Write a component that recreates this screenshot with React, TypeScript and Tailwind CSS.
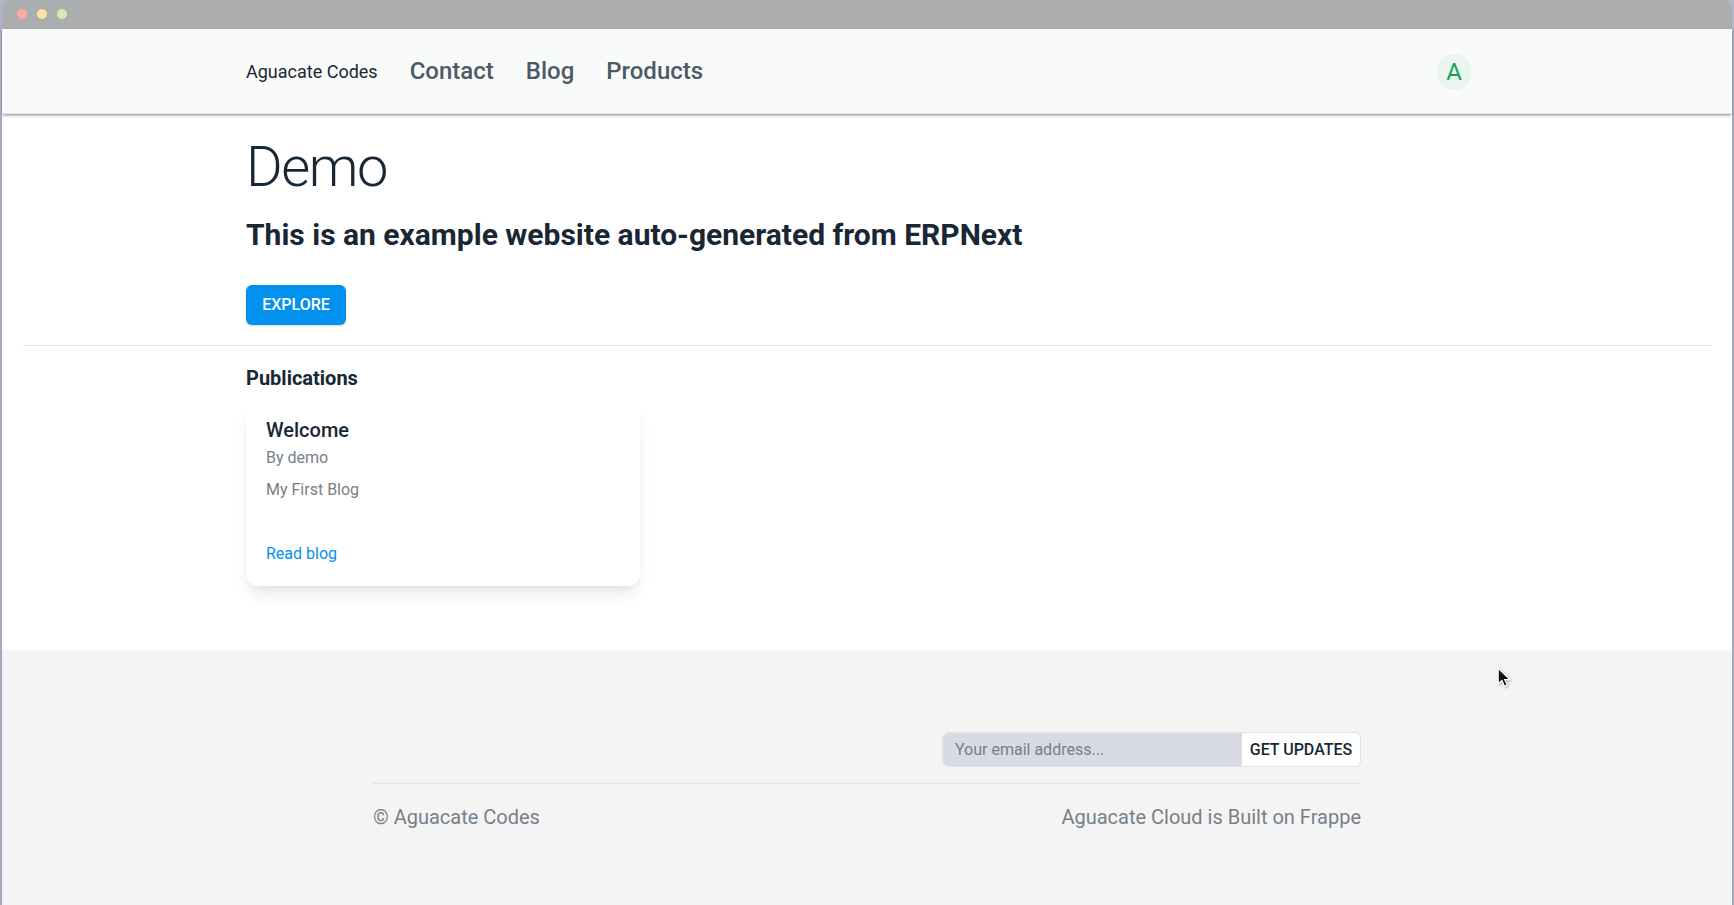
const navLinks = ["Contact", "Blog", "Products"];

function TitleBar() {
  return (
    <div className="flex h-[29px] shrink-0 items-center gap-[10px] rounded-t-[10px] bg-[#abadae] pb-px pl-[15px]">
      <span className="size-[10px] rounded-full bg-[#ffa9a7]" />
      <span className="size-[10px] rounded-full bg-[#ffe3a0]" />
      <span className="size-[10px] rounded-full bg-[#d4eab4]" />
    </div>
  );
}

function Header() {
  return (
    <header className="relative flex h-[85px] shrink-0 items-center justify-between bg-[#f9fbfa] pr-[260px] pl-[244px] shadow-[inset_0_-1px_0_#e6e8e8,0_2px_3px_-1px_rgba(0,0,0,0.5)]">
      <nav className="flex items-center gap-8 pb-0.5">
        <a className="pt-0.5 text-[18px] leading-6 text-[#192734]">Aguacate Codes</a>
        {navLinks.map((label) => (
          <a key={label} className="text-2xl leading-8 font-medium text-[#4c5a67]">
            {label}
          </a>
        ))}
      </nav>
      <div className="mt-px flex size-9 items-center justify-center rounded-full bg-[#eaf5ee] text-2xl leading-none text-[#16a05f]">
        A
      </div>
    </header>
  );
}

function BlogCard() {
  return (
    <article className="mt-[10px] h-[184px] w-[394px] rounded-xl bg-white px-5 pt-[14px] text-base leading-6 shadow-[0_10px_15px_-3px_rgba(0,0,0,0.1),0_4px_6px_-2px_rgba(0,0,0,0.03)]">
      <h3 className="text-xl leading-7 font-medium text-[#192734]">Welcome</h3>
      <p className="mt-0.5 text-[#74808b]">By demo</p>
      <p className="mt-2 text-[#7c7e80]">My First Blog</p>
      <a className="mt-10 block text-[#0291ee]">Read blog</a>
    </article>
  );
}

function Footer() {
  return (
    <footer className="flex flex-1 flex-col bg-[#f4f4f4] pr-[371px] pl-[371px] shadow-[0_-1px_3px_rgba(0,0,0,0.04)]">
      <div className="mt-[81px] flex h-[35px] w-[419px] self-end overflow-hidden rounded-md border border-[#e2e4e8] bg-white text-base">
        <div className="flex w-[299px] items-center bg-[#d8dbe4] pl-3 text-[#74808b]">
          Your email address...
        </div>
        <button className="flex flex-1 items-center justify-center font-medium text-[#192734]">
          GET UPDATES
        </button>
      </div>
      <hr className="mt-4 border-[#e2e2e4]" />
      <div className="mt-[19px] flex justify-between text-xl leading-7 text-[#74808b]">
        <span>© Aguacate Codes</span>
        <span>Aguacate Cloud is Built on Frappe</span>
      </div>
    </footer>
  );
}

export default function App() {
  return (
    <div className="relative h-[905px] w-[1734px] overflow-hidden bg-[#b1b3cb] px-[2px] font-[Roboto,sans-serif]">
      <div className="flex h-full flex-col">
        <TitleBar />
        <div className="flex flex-1 flex-col bg-white shadow-[0_1px_2px_rgba(0,0,0,0.3)]">
          <Header />
          <main className="h-[537px] shrink-0">
            <section className="pl-[244px] text-[#192734]">
              <h1 className="pt-[19px] text-[56px] leading-[68px] font-light tracking-[-0.025em]">
                Demo
              </h1>
              <h2 className="pt-3 text-[30px] leading-[44px] font-bold">
                This is an example website auto-generated from ERPNext
              </h2>
              <button className="mt-7 flex h-10 w-[100px] items-center justify-center rounded-md bg-[#0291ee] pb-px text-base font-medium text-white shadow-[0_1px_2px_rgba(0,0,0,0.16)]">
                EXPLORE
              </button>
            </section>
            <hr className="mr-5 ml-[21px] mt-5 border-[#e2e2e4]" />
            <section className="pt-[18px] pl-[244px]">
              <h2 className="text-xl leading-7 font-bold text-[#192734]">Publications</h2>
              <BlogCard />
            </section>
          </main>
          <Footer />
        </div>
      </div>
      <svg
        className="absolute top-[667px] left-[1497px] drop-shadow-[1px_1px_1px_rgba(0,0,0,0.3)]"
        width="15"
        height="21"
        viewBox="0 0 15 21"
      >
        <path
          d="M1.2 1.2v15.6l3.7-3.3 2.6 5.8 2.8-1.2-2.6-5.5h5.2z"
          fill="#111"
          stroke="#fff"
          strokeWidth="1.2"
        />
      </svg>
    </div>
  );
}
